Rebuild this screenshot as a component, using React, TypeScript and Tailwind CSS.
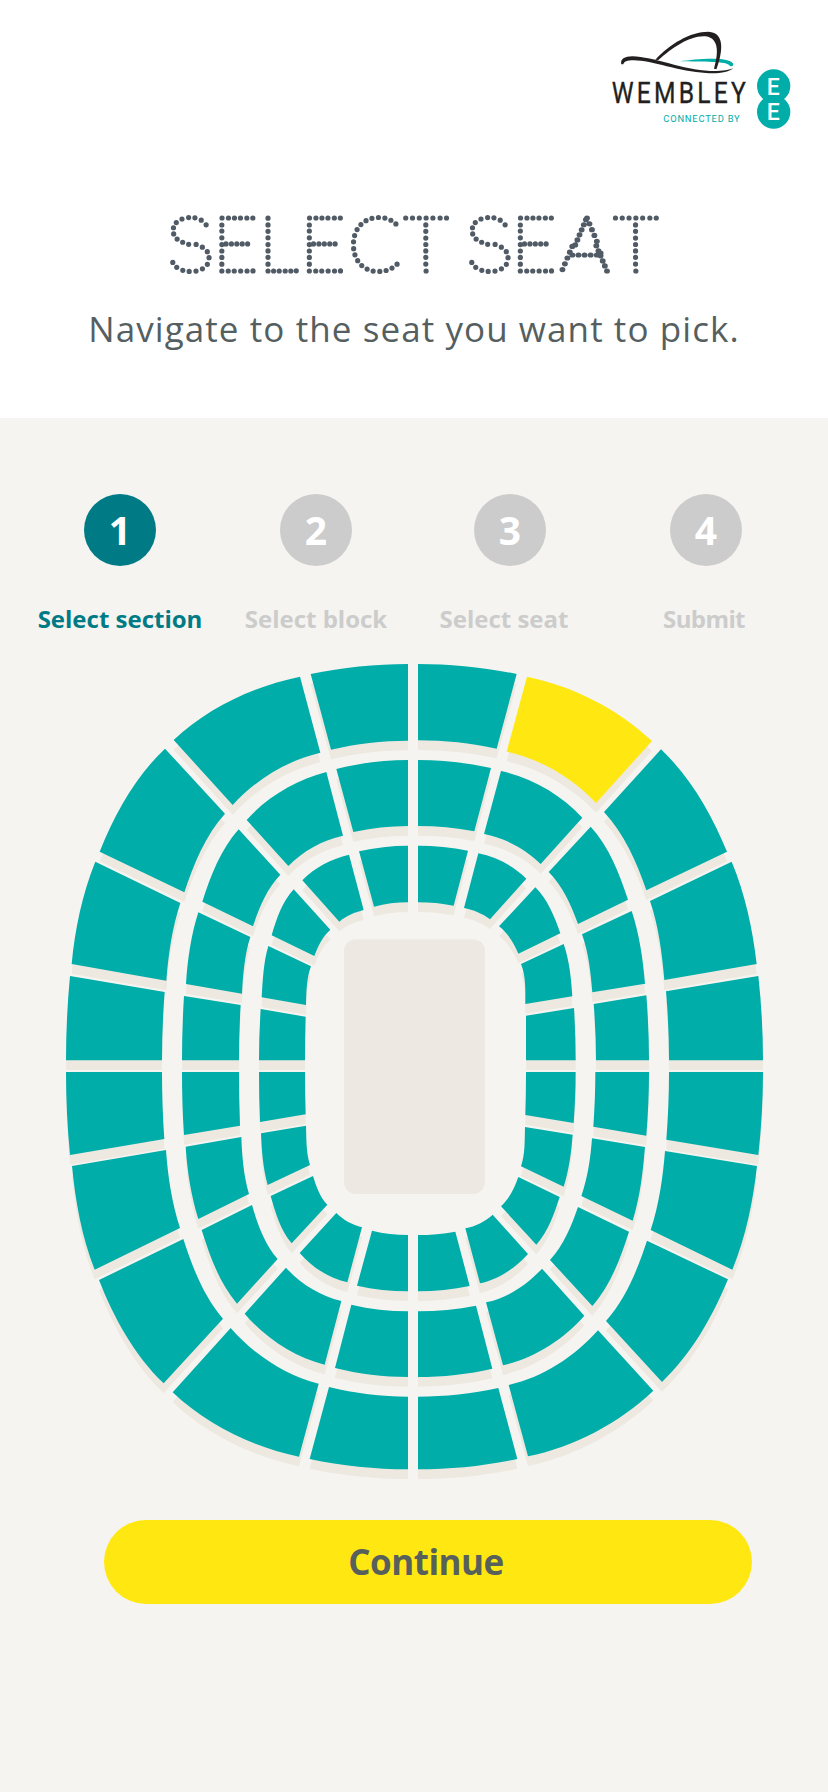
import { useState } from "react";

type Point = [number, number];

const steps = [
  { id: 1, label: "Select section", labelClass: "" },
  { id: 2, label: "Select block", labelClass: "" },
  { id: 3, label: "Select seat", labelClass: "relative right-1.5" },
  { id: 4, label: "Submit", labelClass: "relative right-0.5 tracking-[-0.6px]" },
];

// Each ring lists its outer and inner edge, two points per section,
// running from the vertical axis of the bowl to the horizontal one.
const quadrants = [
  {
    id: "tl",
    x: 0,
    y: 0,
    dir: [-1, 1],
    rings: [
      ["1074,42 782,72 750,80 371,270 345,296 149,605 136,635 65,942 60,978 48,1231", "1074,272 843,299 811,308 548,465 525,491 403,727 391,759 349,992 344,1026 336,1231"],
      ["1074,330 859,357 829,366 590,510 566,538 457,755 445,787 408,1002 402,1038 396,1231", "1074,528 910,546 879,557 715,648 691,674 609,829 601,861 576,1031 572,1065 567,1231"],
      ["1074,587 927,604 897,614 757,691 731,718 665,856 655,888 635,1042 632,1077 627,1231", "1074,757 972,770 941,780 868,815 841,839 793,918 783,949 768,1065 767,1100 765,1231"],
    ],
  },
  {
    id: "tr",
    x: 1080,
    y: 0,
    dir: [1, 1],
    rings: [
      ["24,42 320,72 351,80 726,273 753,298 951,605 965,635 1040,942 1045,978 1059,1231", "24,271 260,296 290,305 558,459 582,486 709,721 720,753 763,990 768,1024 777,1231"],
      ["24,330 243,354 273,363 517,503 542,530 654,749 665,783 705,1001 709,1036 717,1231", "24,528 193,544 222,552 392,642 416,666 504,822 516,853 547,1027 551,1062 558,1231"],
      ["24,587 174,602 205,610 349,686 376,712 451,850 461,882 487,1039 492,1074 497,1231", "24,757 131,767 162,774 240,808 267,829 325,911 333,942 346,1062 348,1097 348,1231"],
    ],
  },
  {
    id: "bl",
    x: 0,
    y: 1230,
    dir: [-1, -1],
    rings: [
      ["1074,1228 779,1197 747,1190 368,997 341,970 147,660 134,629 66,318 60,285 48,36", "1074,1010 837,981 806,971 542,804 519,776 400,537 390,504 348,270 343,237 336,36"],
      ["1074,951 855,924 824,914 584,761 561,731 455,510 445,477 407,260 402,225 396,36", "1074,754 904,734 874,723 708,623 683,597 606,435 597,402 574,231 570,197 567,36"],
      ["1074,694 921,677 892,667 749,579 725,550 662,408 653,375 633,220 630,186 627,36", "1074,525 966,512 936,502 859,459 832,434 789,348 780,315 768,197 767,163 765,36"],
    ],
  },
  {
    id: "br",
    x: 1080,
    y: 1230,
    dir: [1, -1],
    rings: [
      ["24,1228 322,1197 354,1189 730,992 756,966 954,658 967,629 1041,318 1045,285 1059,36", "24,1010 265,984 296,975 564,811 588,783 711,542 722,510 765,273 769,239 777,36"],
      ["24,951 247,926 279,916 523,767 547,738 657,515 668,482 705,261 709,227 717,36", "24,754 198,737 228,727 396,626 420,600 504,441 514,408 546,235 550,200 556,36"],
      ["24,694 179,678 210,670 354,582 379,554 449,411 461,380 488,224 491,189 497,36", "24,525 136,515 166,505 248,464 273,439 325,351 333,319 345,201 346,165 348,36"],
    ],
  },
];

function unit([x, y]: Point): Point {
  const l = Math.hypot(x, y);
  return [x / l, y / l];
}

// Mirrors an axis direction across a chord, as on a circular arc
function reflect(d: Point, c: Point): Point {
  const k = 2 * (d[0] * c[0] + d[1] * c[1]);
  return [k * c[0] - d[0], k * c[1] - d[1]];
}

// Splits an edge into one smooth cubic per section
function edgeCurves(edge: string, dir: number[]) {
  const pts = edge.split(" ").map((p) => p.split(",").map(Number) as Point);
  const count = pts.length / 2;
  const chords: { v: Point; len: number }[] = [];
  for (let i = 0; i < count; i++) {
    const a = pts[2 * i];
    const b = pts[2 * i + 1];
    const v: Point = [b[0] - a[0], b[1] - a[1]];
    chords.push({ v: unit(v), len: Math.hypot(...v) });
  }

  const first: Point = [dir[0], 0];
  const last: Point = [0, dir[1]];
  const tangents: Point[] = [first, reflect(first, chords[0].v)];
  for (let i = 2; i < count - 1; i++) {
    const p = chords[i - 1];
    const n = chords[i];
    tangents.push(unit([p.v[0] * n.len + n.v[0] * p.len, p.v[1] * n.len + n.v[1] * p.len]));
  }
  tangents.push(reflect(last, chords[count - 1].v), last);

  return chords.map((c, i) => {
    const a = pts[2 * i];
    const b = pts[2 * i + 1];
    const h = c.len / 3;
    const c1: Point = [a[0] + tangents[i][0] * h, a[1] + tangents[i][1] * h];
    const c2: Point = [b[0] - tangents[i + 1][0] * h, b[1] - tangents[i + 1][1] * h];
    return [a, c1, c2, b];
  });
}

const sections = quadrants.flatMap((q) =>
  q.rings.flatMap(([outer, inner], ring) => {
    const out = edgeCurves(outer, q.dir);
    const inn = edgeCurves(inner, q.dir);
    return out.map((o, i) => {
      const n = inn[i];
      return {
        id: `${q.id}-${ring}-${i}`,
        transform: `translate(${q.x} ${q.y})`,
        d: `M${o[0]}C${o[1]} ${o[2]} ${o[3]}L${n[3]}C${n[2]} ${n[1]} ${n[0]}Z`,
      };
    });
  })
);

function StadiumMap() {
  const [selected, setSelected] = useState("tr-0-1");

  return (
    <svg viewBox="0 0 2190 2520" className="block w-[730px] h-[840px] ml-[50px]">
      <g transform="translate(0 29)" fill="#ede8e0">
        {sections.map((s) => (
          <path key={s.id} d={s.d} transform={s.transform} />
        ))}
      </g>
      {sections.map((s) => (
        <path
          key={s.id}
          d={s.d}
          transform={s.transform}
          fill={s.id === selected ? "#ffe811" : "#00ada8"}
          className="cursor-pointer"
          onClick={() => setSelected(s.id)}
        />
      ))}
      <rect x="882" y="868" width="423" height="764" rx="36" fill="#ede8e1" />
    </svg>
  );
}

function WembleyLogo() {
  return (
    <svg viewBox="0 0 600 360" className="block w-[200px] h-[120px]">
      <path d="M240 124C290 116 385 109 399 130C402 136 398 140 390 138C380 122 310 127 240 124Z" fill="#00ada8" />
      <path
        d="M64 133C60 117 74 109 97 109C160 110 250 150 330 153C364 154 388 150 400 144C388 157 352 162 318 159C235 155 150 118 94 121C76 122 72 127 70 133Z"
        fill="#231f20"
      />
      <path d="M166 119C210 72 270 35 325 35C380 38 365 105 349 148L342 146C354 105 360 55 317 49C270 45 215 85 175 120Z" fill="#231f20" />
      <text
        transform="translate(35 249) scale(0.86 1)"
        textLength="468"
        fontSize="86"
        fontFamily="Roboto, sans-serif"
        fill="#231f20"
        stroke="#231f20"
        strokeWidth="1"
      >
        WEMBLEY
      </text>
      <text x="190" y="306" textLength="229" fontSize="28" fontFamily="Roboto, sans-serif" fill="#00ada8">
        CONNECTED BY
      </text>
      <circle cx="521" cy="198" r="50" fill="#00ada8" />
      <circle cx="521" cy="276" r="50" fill="#00ada8" />
      <g fontSize="69" fontWeight="500" fontFamily="Roboto, sans-serif" fill="#fff">
        <text x="500" y="225">E</text>
        <text x="500" y="299">E</text>
      </g>
    </svg>
  );
}

// Dot spacing along the hairline outline of every letter in the title
const dotted = {
  S: {
    font: "Roboto",
    size: 74.6,
    offset: 24.8,
    gaps: [6.4, 6.4, 6.4, 6, 6, 6.8, 6.8, 6, 6.8, 6.8, 81.6, 6.8, 6.8, 6.4, 6.8, 6.8, 6.8, 6.8, 6.4, 6.8, 6.4],
  },
  E: {
    font: "Lato",
    size: 76.2,
    offset: 0.8,
    gaps: [6, 6.4, 6.4, 6, 6.4, 6.8, 6.8, 6.4, 6.4, 6.8, 6.8, 6, 7.2, 6.4, 6, 6, 6.4, 6, 82.8, 5.4, 5.4, 5.4, 5.4],
  },
  L: {
    font: "Inter",
    size: 73,
    offset: 0,
    gaps: [5.6, 5.6, 6, 5.6, 5.6, 81.2, 6.8, 6.4, 6.4, 6.8, 6.4, 6.4, 6.8],
  },
  C: {
    font: "Lato",
    size: 76.2,
    offset: 0.8,
    gaps: Array(19).fill(6.42),
  },
  A: {
    font: "Roboto",
    size: 74.6,
    offset: 0,
    gaps: [5.4, 5.4, 5.4, 5.4, 5.4, 31.4, 6.2, 6.2, 6.2, 6.2],
  },
  T: {
    font: "Lato",
    size: 76.2,
    offset: 72.8,
    gaps: [7.2, 6.8, 6.4, 6.4, 6.4, 6.8, 6.4, 27.2, 6.8, 6.8, 6.8, 6.8, 7.2, 6.4],
  },
};

const title: { char: keyof typeof dotted; x: number; stretch?: number }[] = [
  { char: "S", x: 168 },
  { char: "E", x: 212.9 },
  { char: "L", x: 259.8 },
  { char: "E", x: 300.6 },
  { char: "C", x: 348.2 },
  { char: "T", x: 404.5 },
  { char: "S", x: 467 },
  { char: "E", x: 511.6 },
  { char: "A", x: 560.6, stretch: 1.13 },
  { char: "T", x: 614.2 },
];

function DottedTitle() {
  return (
    <h1 aria-label="SELECT SEAT">
      <svg viewBox="0 0 828 100" className="block w-[828px] h-[100px]">
        <g fontWeight="100" fill="none" stroke="#515b66" strokeWidth="5.2" strokeLinecap="round">
          {title.map((l, i) => {
            const { font, size, offset, gaps } = dotted[l.char];
            return (
              <text
                key={i}
                transform={`translate(${l.x} 76.4) scale(${l.stretch ?? 1} 1)`}
                fontFamily={font}
                fontSize={size}
                strokeDasharray={`0 ${gaps.join(" 0 ")} 0 9999`}
                strokeDashoffset={-offset}
              >
                {l.char}
              </text>
            );
          })}
        </g>
      </svg>
    </h1>
  );
}

export default function App() {
  return (
    <div className="w-[828px] h-[1792px] bg-[#f5f4f0] overflow-hidden font-['Open_Sans',sans-serif]">
      <header className="h-[418px] bg-white pt-5">
        <div className="flex justify-end pr-7">
          <WembleyLogo />
        </div>
        <div className="mt-[55px]">
          <DottedTitle />
        </div>
        <p className="mt-[10px] text-center text-[35px] leading-[48px] tracking-[1.08px] text-[#555f61] whitespace-nowrap">
          Navigate to the seat you want to pick.
        </p>
      </header>

      <ol className="grid grid-cols-[196px_196px_192px_200px] pl-[22px] pt-[76px] h-[232px]">
        {steps.map((step) => {
          const active = step.id === 1;
          return (
            <li key={step.id} className="flex flex-col items-center">
              <span
                className={`flex items-center justify-center size-[72px] rounded-full text-[39px] font-bold text-white ${
                  active ? "bg-[#007b85]" : "bg-[#cccccc]"
                }`}
              >
                {step.id}
              </span>
              <span
                className={`mt-[37px] text-[24px] leading-8 font-bold whitespace-nowrap ${step.labelClass} ${
                  active ? "text-[#007b85]" : "text-[#cccccc]"
                }`}
              >
                {step.label}
              </span>
            </li>
          );
        })}
      </ol>

      <StadiumMap />

      <button className="block ml-[104px] mt-[30px] w-[648px] h-[84px] pr-1 rounded-full bg-[#ffe811] text-[35px] tracking-[-0.5px] font-bold text-[#58605c] cursor-pointer">
        Continue
      </button>
    </div>
  );
}
